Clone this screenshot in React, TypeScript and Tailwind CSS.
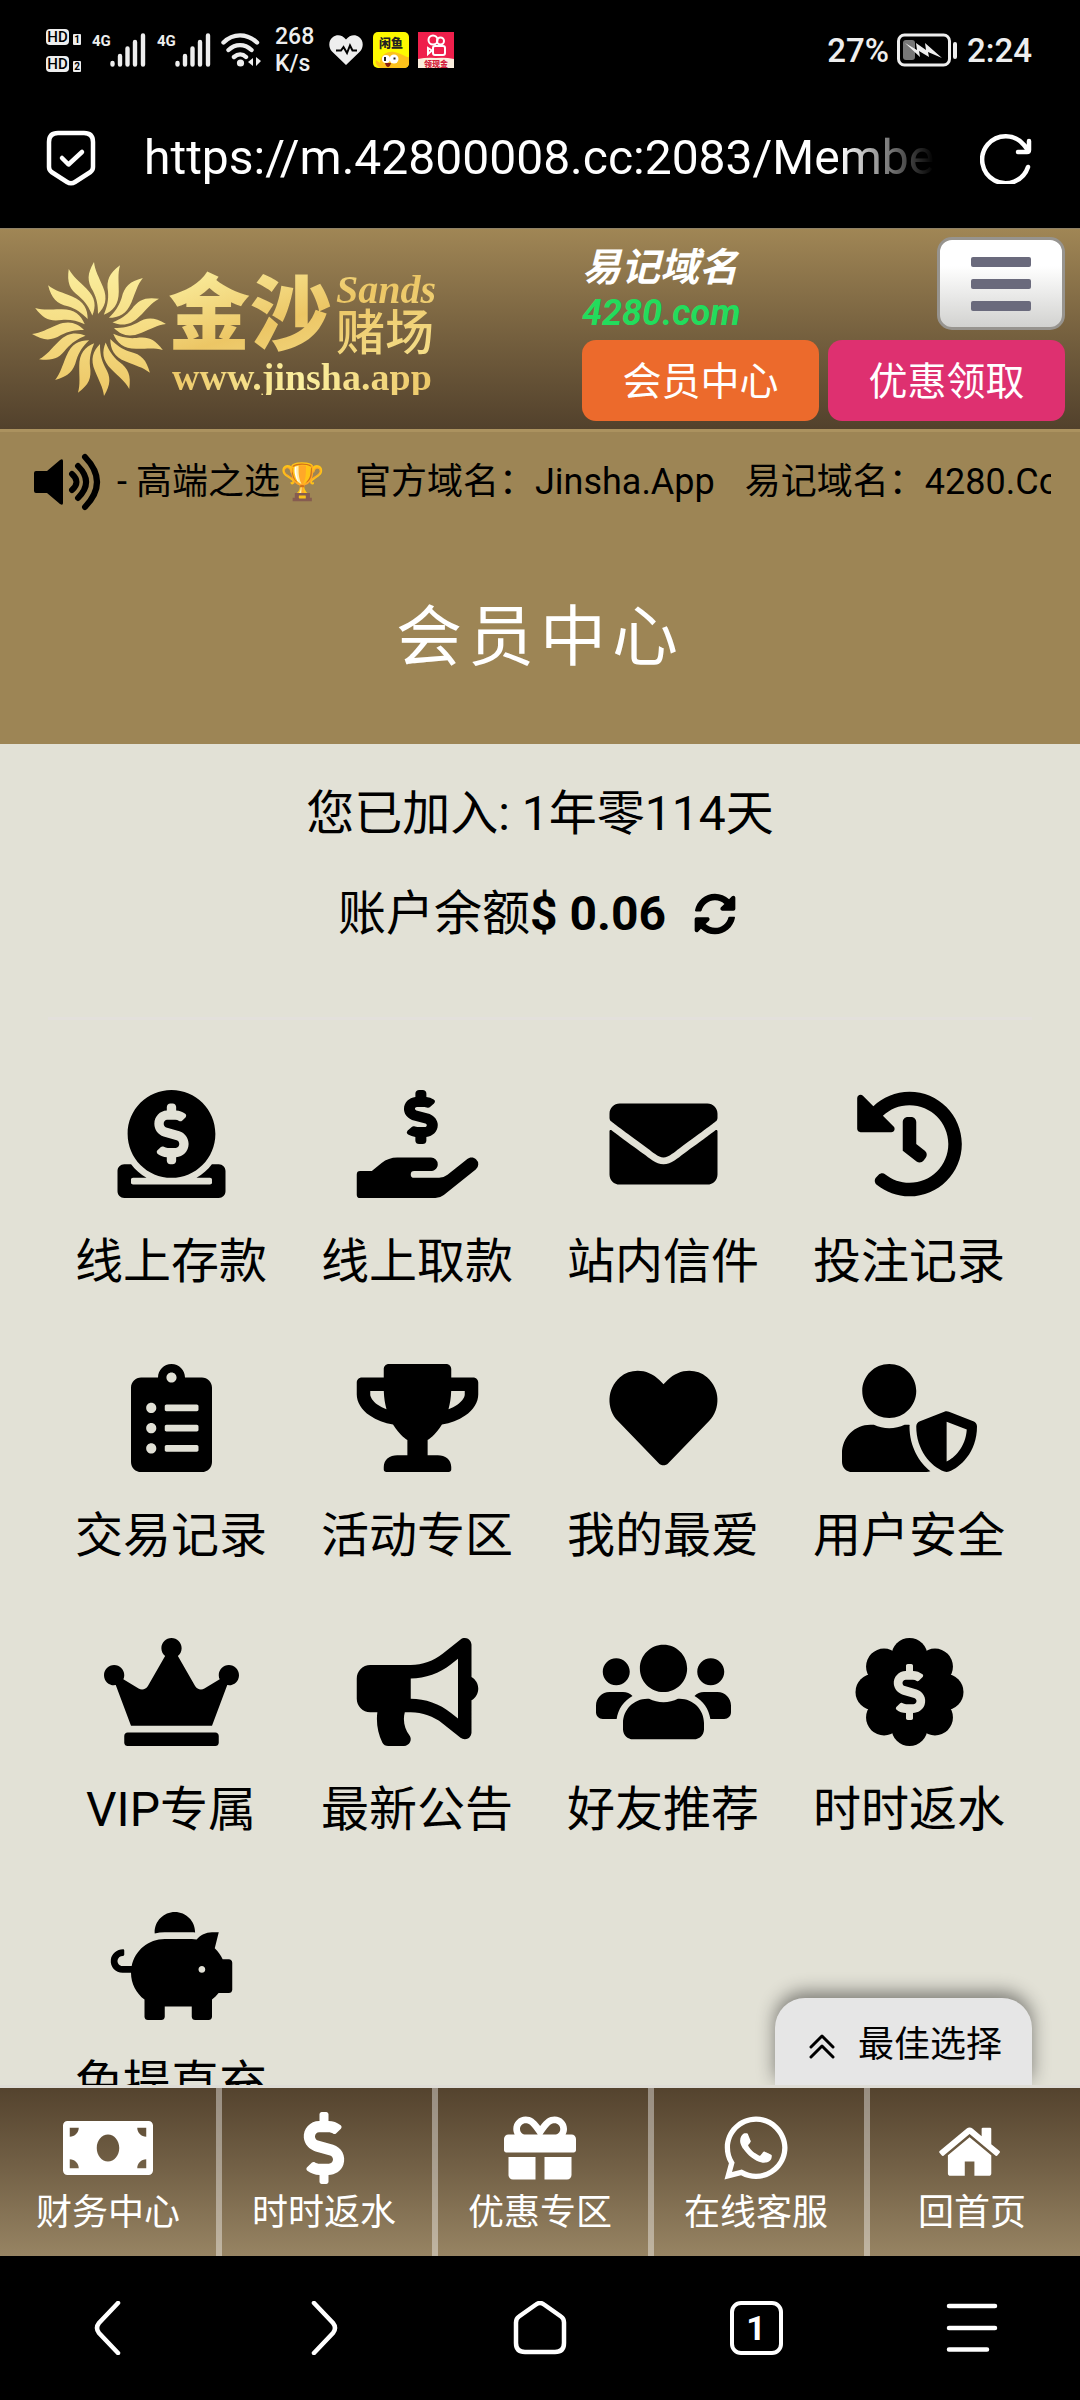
import type { ReactNode } from "react";
import {
  FaBullhorn,
  FaClipboardList,
  FaCrown,
  FaDollarSign,
  FaDonate,
  FaEnvelope,
  FaGift,
  FaHandHoldingUsd,
  FaHeart,
  FaHistory,
  FaMoneyBill,
  FaPiggyBank,
  FaSyncAlt,
  FaTrophy,
  FaUsers,
  FaUserShield,
  FaWhatsapp,
} from "react-icons/fa";

interface IMenuItem {
  label: string;
  icon: ReactNode;
}

const lobes = [0, 45, 90, 135, 180, 225, 270, 315];
const rays = Array.from({ length: 16 }, (_, i) => i * 22.5);

const BadgeDollar = () => (
  <svg viewBox="0 0 108 108" fill="currentColor">
    <circle cx="54" cy="54" r="40" />
    {lobes.map((deg) => (
      <circle key={deg} cx="54" cy="18" r="18" transform={`rotate(${deg} 54 54)`} />
    ))}
    <FaDollarSign x="26" y="26" size={56} color="#e2e1d6" />
  </svg>
);

const HouseIcon = () => (
  <svg viewBox="-60 -160 1912 1912" fill="currentColor">
    <path d="M1408 992v480q0 26-19 45t-45 19h-384v-384h-256v384h-384q-26 0-45-19t-19-45v-480q0-1 .5-3t.5-3l575-474 575 474q1 2 1 6zm223-69l-62 74q-8 9-21 11h-3q-13 0-21-7l-692-577-692 577q-12 8-24 7-13-2-21-11l-62-74q-8-10-7-23.5t11-21.5l719-599q32-26 76-26t76 26l244 204v-195q0-14 9-23t23-9h192q14 0 23 9t9 23v408l219 182q10 8 11 21.5t-7 23.5z" />
  </svg>
);

const menu: IMenuItem[] = [
  { label: "线上存款", icon: <FaDonate /> },
  { label: "线上取款", icon: <FaHandHoldingUsd /> },
  { label: "站内信件", icon: <FaEnvelope /> },
  { label: "投注记录", icon: <FaHistory /> },
  { label: "交易记录", icon: <FaClipboardList /> },
  { label: "活动专区", icon: <FaTrophy /> },
  { label: "我的最爱", icon: <FaHeart /> },
  { label: "用户安全", icon: <FaUserShield /> },
  { label: "VIP专属", icon: <FaCrown /> },
  { label: "最新公告", icon: <FaBullhorn /> },
  { label: "好友推荐", icon: <FaUsers /> },
  { label: "时时返水", icon: <BadgeDollar /> },
  { label: "免提直充", icon: <FaPiggyBank /> },
];

const tabs: IMenuItem[] = [
  { label: "财务中心", icon: <FaMoneyBill /> },
  { label: "时时返水", icon: <FaDollarSign /> },
  { label: "优惠专区", icon: <FaGift /> },
  { label: "在线客服", icon: <FaWhatsapp /> },
  { label: "回首页", icon: <HouseIcon /> },
];

const HdBadge = ({ sim }: { sim: string }) => (
  <span className="flex items-end gap-1 text-black">
    <span className="w-[23px] rounded-[4px] bg-[#eee] text-center text-[15px] font-medium leading-4">
      HD
    </span>
    <span className="w-2 rounded-[1px] bg-[#eee] text-center text-[10px] font-bold leading-[11px]">
      {sim}
    </span>
  </span>
);

const Signal = () => (
  <span className="flex items-start">
    <span className="w-[18px] text-[15px] font-bold leading-4">4G</span>
    <svg viewBox="0 0 36 34" className="h-[34px] w-9" stroke="#eee" strokeWidth="4.4" strokeLinecap="round">
      <path d="M2.5 30v1.5M10 23v8.500M17.500 15.500v16M25 9v22.500M33 2.500v29" />
    </svg>
  </span>
);

const StatusBar = () => (
  <div className="flex h-[100px] items-center pl-[46px] pr-12 text-[#eee]">
    <div className="flex flex-col gap-[11px]">
      <HdBadge sim="1" />
      <HdBadge sim="2" />
    </div>
    <div className="ml-[11px] flex gap-[11px]">
      <Signal />
      <Signal />
    </div>
    <svg viewBox="0 0 40 34" className="ml-2.5 h-[34px] w-10" fill="none" stroke="#eee" strokeWidth="4.400" strokeLinecap="round">
      <path d="M2.500 9.500C12 0 26 0 36 9.500M7.500 17c7-6.500 16-6.500 23 0M13 24c4-3.500 8.500-3.500 12 0" />
      <circle cx="19.500" cy="30" r="3.600" fill="#eee" stroke="none" />
      <path d="M27 29l5-4v8zM40 28l-5-4v9z" fill="#eee" stroke="none" />
    </svg>
    <div className="ml-3.5 w-[42px] text-[23px] font-medium leading-[27px]">
      268
      <br />
      K/s
    </div>
    <svg viewBox="0 0 34 30" className="ml-3 h-[30px] w-[34px]">
      <path d="M17 30L3 16.500C-1 12-.5 5 4 2c4-3 9.500-2 13 2.500C20.500 0 26 -1 30 2c4.500 3 5 10 1 14.500z" fill="#eee" />
      <path d="M7 15.500h5l2.500-3.500 3.500 6 3-7.500 2.500 5H28" fill="none" stroke="#000" strokeWidth="2" />
    </svg>
    <svg viewBox="0 0 36 36" className="ml-2.5 h-9 w-9">
      <rect width="36" height="36" rx="5" fill="#fdf900" />
      <path d="M8 36c-5-2-6-6-5-8l4 3c0-8 7-12 14-11s13 6 15 5v6q0 5-5 5z" fill="#fcc21b" />
      <circle cx="13" cy="27" r="4" fill="#fff" />
      <circle cx="21" cy="27" r="4.500" fill="#fff" />
      <path d="M12 25v4M20.500 26.500h2" stroke="#222" strokeWidth="2" />
      <path d="M12 31h6q-1 4-3 4t-3-4z" fill="#8c1b10" />
      <text x="18" y="16" textAnchor="middle" fontSize="12" fontWeight="900" fill="#222">
        闲鱼
      </text>
    </svg>
    <svg viewBox="0 0 36 36" className="ml-[9px] h-9 w-9">
      <rect width="36" height="36" fill="#ef1f4b" />
      <path d="M0 27q9-2 18-1 9-1 18 1v9H0z" fill="#fbeedd" />
      <g fill="none" stroke="#fff" strokeWidth="2">
        <circle cx="15" cy="8" r="4.500" />
        <circle cx="22.500" cy="9" r="3.500" />
        <rect x="15" y="14" width="12" height="9" rx="2" />
        <path d="M14 18.500l-4-2.500v6z" />
      </g>
      <text x="18" y="34.500" textAnchor="middle" fontSize="8" fontWeight="900" fill="#d31f3d">
        领现金
      </text>
    </svg>
    <div className="ml-auto flex items-center gap-2 text-[33px] font-medium leading-none">
      <span>27%</span>
      <svg viewBox="0 0 62 34" className="h-[34px] w-[62px]">
        <rect x="1.500" y="2" width="51" height="30" rx="6" fill="none" stroke="#eee" strokeWidth="3" />
        <rect x="6" y="7" width="12" height="20" rx="3" fill="#777" />
        <path d="M8 10l12 7-1-7 10 7-1-7 17 15-14-6 1 5-10-6 1 6z" fill="#eee" />
        <rect x="56" y="9" width="4" height="17" rx="2" fill="#eee" />
      </svg>
      <span>2:24</span>
    </div>
  </div>
);

const AddressBar = () => (
  <div className="flex h-32 items-center pb-3 pl-[46px] pr-12">
    <svg viewBox="0 0 50 56" className="h-14 w-[50px] shrink-0" fill="none" stroke="#fff" strokeWidth="4.500" strokeLinecap="round" strokeLinejoin="round">
      <path d="M12 3h26q9 0 9 9v25q0 3-2.500 5L29 52q-4 2.500-8 0L5.500 42Q3 40 3 37V12q0-9 9-9z" />
      <path d="M16 28l6.500 6.500L36 22" />
    </svg>
    <div className="ml-[48px] min-w-0 flex-1 overflow-hidden whitespace-nowrap [mask-image:linear-gradient(to_right,black_88%,transparent)] text-[48px] leading-[60px] text-white">
      https://m.42800008.cc:2083/Member/
    </div>
    <button type="button" aria-label="刷新" className="ml-[46px] shrink-0">
      <svg viewBox="0 0 52 52" className="h-[52px] w-[52px]" fill="none" stroke="#fff" strokeWidth="4.500" strokeLinecap="round" strokeLinejoin="round">
        <path d="M48 35A23.500 23.500 0 1 1 44 13L48 18M49 9v9q0 2-2 2h-9" />
      </svg>
    </button>
  </div>
);

const Logo = () => (
  <a href="#" className="flex items-center">
    <svg viewBox="-67 -68 134 136" className="h-[136px] w-[134px]">
      <defs>
        <linearGradient id="ray" gradientUnits="userSpaceOnUse" x1="0" y1="-68" x2="0" y2="68">
          <stop offset="0" stopColor="#fbf0a0" />
          <stop offset=".5" stopColor="#f5dc83" />
          <stop offset="1" stopColor="#ecc665" />
        </linearGradient>
        <mask id="sun">
          {rays.map((deg) => (
            <path
              key={deg}
              fill="#fff"
              transform={`rotate(${deg})`}
              d="M-5-67C-12-55-12-48-6-38C-2-30-1-24-1-15C6-22 9-30 4-42C0-52-4-58-5-67z"
            />
          ))}
        </mask>
      </defs>
      <rect x="-67" y="-68" width="134" height="136" fill="url(#ray)" mask="url(#sun)" />
    </svg>
    <span className="flex flex-col pt-2">
      <span className="flex items-center gap-1 bg-linear-to-br from-[#fbf0a0] via-[#ecc665] to-[#f5e08c] bg-clip-text pl-0.5 text-transparent">
        <span className="text-[82px] font-black leading-[88px]">金沙</span>
        <span className="flex flex-col">
          <span className="font-['Liberation_Serif',serif] text-[40px] font-bold italic leading-[38px]">Sands</span>
          <span className="text-[49px] font-medium leading-[50px]">赌场</span>
        </span>
      </span>
      <span className="bg-linear-to-r from-[#ecc665] via-[#fbf0a0] to-[#ecc665] bg-clip-text pl-1.5 font-['Liberation_Serif',serif] text-[38px] font-bold leading-9 text-transparent">
        www.jinsha.app
      </span>
    </span>
  </a>
);

const SiteHeader = () => (
  <header className="flex justify-between border-b-[3px] border-t border-b-[#ab925f] border-t-[#8f8268] bg-linear-to-b from-[#a08655] to-[#52412c] py-2 pl-8 pr-[15px]">
    <Logo />
    <div className="flex w-[483px] flex-col gap-[9px]">
      <div className="flex justify-between">
        <div className="pt-1 font-bold italic">
          <p className="text-[39px] leading-[54px] text-white">易记域名</p>
          <p className="text-[36px] leading-[36px] text-[#23dc5c]">4280.com</p>
        </div>
        <button
          type="button"
          aria-label="菜单"
          className="flex h-[93px] w-32 flex-col items-center justify-center gap-3 rounded-[15px] border-[3px] border-[#97948f] bg-linear-to-b from-white from-30% to-[#d2d2d0]"
        >
          <span className="h-2.5 w-[60px] rounded-[2px] bg-[#6a6a7c]" />
          <span className="h-2.5 w-[60px] rounded-[2px] bg-[#6a6a7c]" />
          <span className="h-2.5 w-[60px] rounded-[2px] bg-[#6a6a7c]" />
        </button>
      </div>
      <div className="grid grid-cols-2 gap-[9px] text-[39px] leading-[77px] text-white">
        <button type="button" className="rounded-[14px] bg-[#ec6a2c] pt-1">会员中心</button>
        <button type="button" className="rounded-[14px] bg-[#de3070] pt-1">优惠领取</button>
      </div>
    </div>
  </header>
);

const Notice = () => (
  <div className="flex items-center bg-[#9d8555] py-5 pl-8 pr-[29px] text-black">
    <svg viewBox="0 0 70 60" className="h-[60px] w-[70px] shrink-0">
      <path d="M4 19h11L28 8q3-2 3 1v42q0 3-3 1L15 41H4q-2 0-2-2V21q0-2 2-2z" />
      <path d="M40 22q9 8 0 16M46 14q16 16 0 32M53 5q24 25 0 50" fill="none" stroke="currentColor" strokeWidth="6" strokeLinecap="round" />
    </svg>
    <div className="ml-[15px] flex min-w-0 flex-1 gap-[30px] overflow-hidden whitespace-nowrap text-[36px] leading-[60px]">
      <span>- 高端之选🏆</span>
      <span>官方域名：Jinsha.App</span>
      <span>易记域名：4280.Com</span>
    </div>
  </div>
);

const BrowserBar = () => (
  <nav className="grid h-36 grid-cols-5 items-center justify-items-center bg-black text-white">
    <button type="button" aria-label="后退">
      <svg viewBox="0 0 54 54" className="h-[54px] w-[54px]" fill="none" stroke="currentColor" strokeWidth="4.500" strokeLinecap="round">
        <path d="M37 2L18 22q-4 5 0 10L37 52" />
      </svg>
    </button>
    <button type="button" aria-label="前进">
      <svg viewBox="0 0 54 54" className="h-[54px] w-[54px]" fill="none" stroke="currentColor" strokeWidth="4.500" strokeLinecap="round">
        <path d="M17 2L36 22q4 5 0 10L17 52" />
      </svg>
    </button>
    <button type="button" aria-label="主页">
      <svg viewBox="0 0 54 54" className="h-[54px] w-[54px]" fill="none" stroke="currentColor" strokeWidth="4.500" strokeLinejoin="round">
        <path d="M23 3.500q4-3 8 0l17 12q3 2 3 6V42q0 9-9 9H12q-9 0-9-9V21.500q0-4 3-6z" />
      </svg>
    </button>
    <button type="button" className="h-[54px] w-[53px] rounded-[11px] border-4 text-[34px] font-bold leading-[46px]">
      1
    </button>
    <button type="button" aria-label="更多">
      <svg viewBox="0 0 54 54" className="h-[54px] w-[54px]" stroke="currentColor" strokeWidth="4.500" strokeLinecap="round">
        <path d="M4 5h46M4 27h46M4 48.500h38" />
      </svg>
    </button>
  </nav>
);

const App = () => {
  return (
    <div className="flex h-screen flex-col bg-black font-[Roboto,'Noto_Sans_CJK_SC',sans-serif]">
      <StatusBar />
      <AddressBar />
      <SiteHeader />
      <Notice />
      <h1 className="bg-[#9d8555] py-14 text-center text-[66px] leading-[100px] tracking-[6px] text-white">
        会员中心
      </h1>
      <main className="relative min-h-0 flex-1 overflow-hidden bg-[#e2e1d6] px-12 pt-[38px] text-black">
        <div className="flex flex-col items-center gap-9 text-[48px] leading-[64px]">
          <p>您已加入: 1年零114天</p>
          <p className="flex items-center pr-1.5">
            账户余额<b>$ 0.06</b>
            <button type="button" aria-label="刷新余额" className="ml-7">
              <FaSyncAlt className="h-[42px] w-[42px]" />
            </button>
          </p>
        </div>
        <hr className="mb-[70px] mt-[71px] border-t-[3px] border-[#e3e0dc]" />
        <div className="grid grid-cols-4 gap-y-[70px]">
          {menu.map((item) => (
            <a key={item.label} href="#" className="flex flex-col items-center gap-8 text-[48px] leading-[64px]">
              <span className="[&>svg]:h-[108px] [&>svg]:w-[135px]">{item.icon}</span>
              {item.label}
            </a>
          ))}
        </div>
        <button
          type="button"
          className="absolute bottom-0 right-12 flex items-center gap-[23px] rounded-t-[30px] bg-[#e6e6e6] pb-3 pl-[34px] pr-[30px] pt-5 text-[36px] leading-[55px] shadow-[0_-6px_18px_rgba(0,0,0,0.45)]"
        >
          <svg viewBox="0 0 26 26" className="h-[26px] w-[26px]" fill="none" stroke="currentColor" strokeWidth="3" strokeLinecap="round" strokeLinejoin="round">
            <path d="M2 14L13 3l11 11M2 24l11-11 11 11" />
          </svg>
          最佳选择
        </button>
      </main>
      <nav className="grid grid-cols-5 border-t-[3px] border-[#dedcd6] bg-linear-to-b from-[#54432e] to-[#978463] text-white">
        {tabs.map((tab) => (
          <a
            key={tab.label}
            href="#"
            className="flex flex-col items-center border-l-[6px] border-white/40 pb-3.5 pr-1.5 pt-6 text-[36px] leading-[58px] first:border-transparent"
          >
            <span className="[&>svg]:h-[72px] [&>svg]:w-[90px]">{tab.icon}</span>
            {tab.label}
          </a>
        ))}
      </nav>
      <BrowserBar />
    </div>
  );
};

export default App;
